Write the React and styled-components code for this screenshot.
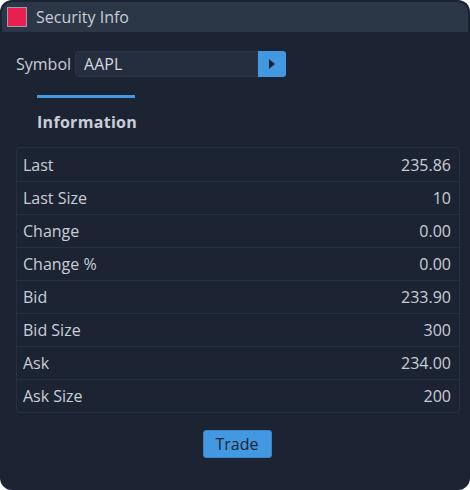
import React from "react";
import styled, { createGlobalStyle } from "styled-components";

const GlobalStyle = createGlobalStyle`
  html, body {
    margin: 0;
    padding: 0;
    background: #ffffff;
  }
  body {
    font-family: "Open Sans", "Noto Sans", sans-serif;
  }
`;

const Window = styled.div`
  width: 470px;
  height: 490px;
  box-sizing: border-box;
  border-radius: 12px;
  overflow: hidden;
  background-color: #1c2433;
  border: 2px solid #1c2433;
  border-bottom: none;
  display: flex;
  flex-direction: column;
`;

const TitleBar = styled.div`
  height: 30px;
  flex: 0 0 auto;
  display: flex;
  align-items: center;
  gap: 9px;
  padding-left: 5px;
  background-color: #2b3646;
  border-radius: 10px 10px 0 0;
`;

const CloseBox = styled.div`
  width: 18px;
  height: 18px;
  background-color: #e8204f;
  border: 1px solid #9aa0a8;
`;

const Title = styled.span`
  color: #c9ced6;
  font-size: 16px;
`;

const Body = styled.div`
  display: flex;
  flex-direction: column;
  padding: 19px 9px 0 14px;
`;

const SymbolRow = styled.div`
  display: flex;
  align-items: center;
  gap: 4px;
`;

const InputGroup = styled.div`
  display: flex;
`;

const Label = styled.span`
  color: #c9ced6;
  font-size: 16px;
`;

const SymbolInput = styled.div`
  width: 183px;
  height: 26px;
  box-sizing: border-box;
  display: flex;
  align-items: center;
  padding-left: 8px;
  background-color: #242e3e;
  border: 1px solid #2a3444;
  border-radius: 3px 0 0 3px;
  color: #d4d8de;
  font-size: 16px;
`;

const GoButton = styled.button`
  width: 28px;
  height: 26px;
  border: none;
  border-radius: 0 3px 3px 0;
  background-color: #4299e1;
  display: flex;
  align-items: center;
  justify-content: center;
  padding: 0;
`;

const Tabs = styled.div`
  display: flex;
  margin-top: 18px;
  padding-left: 21px;
`;

const Tab = styled.div`
  width: 98px;
  border-top: 3px solid #4299e1;
  padding-top: 13px;
  color: #c9ced6;
  font-size: 16px;
  font-weight: 700;
  letter-spacing: 0.3px;
`;

const Table = styled.div`
  margin-top: 14px;
  width: 444px;
  box-sizing: border-box;
  border: 1px solid #253041;
  border-radius: 4px;
`;

const Row = styled.div`
  height: 33px;
  box-sizing: border-box;
  display: flex;
  align-items: center;
  justify-content: space-between;
  padding: 0 8px 0 6px;
  border-top: ${(p) => (p.first ? "none" : "1px solid #253041")};
  color: #c9ced6;
  font-size: 16px;
`;

const Footer = styled.div`
  display: flex;
  justify-content: center;
  margin-top: 17px;
  padding-right: 1px;
`;

const TradeButton = styled.button`
  width: 69px;
  height: 28px;
  border: 1px solid #3a85c6;
  border-radius: 3px;
  background-color: #4299e1;
  color: #1c2433;
  font-family: "Open Sans", "Noto Sans", sans-serif;
  font-size: 16px;
  padding: 0;
`;

const rows = [
  ["Last", "235.86"],
  ["Last Size", "10"],
  ["Change", "0.00"],
  ["Change %", "0.00"],
  ["Bid", "233.90"],
  ["Bid Size", "300"],
  ["Ask", "234.00"],
  ["Ask Size", "200"],
];

export default function App() {
  return (
    <>
      <GlobalStyle />
      <Window>
        <TitleBar>
          <CloseBox />
          <Title>Security Info</Title>
        </TitleBar>
        <Body>
          <SymbolRow>
            <Label>Symbol</Label>
            <InputGroup>
              <SymbolInput>AAPL</SymbolInput>
              <GoButton>
                <svg width="8" height="10" viewBox="0 0 8 10">
                  <path d="M1 0 L7 5 L1 10 Z" fill="#1c2433" />
                </svg>
              </GoButton>
            </InputGroup>
          </SymbolRow>
          <Tabs>
            <Tab>Information</Tab>
          </Tabs>
          <Table>
            {rows.map(([k, v], i) => (
              <Row key={k} first={i === 0}>
                <span>{k}</span>
                <span>{v}</span>
              </Row>
            ))}
          </Table>
          <Footer>
            <TradeButton>Trade</TradeButton>
          </Footer>
        </Body>
      </Window>
    </>
  );
}
